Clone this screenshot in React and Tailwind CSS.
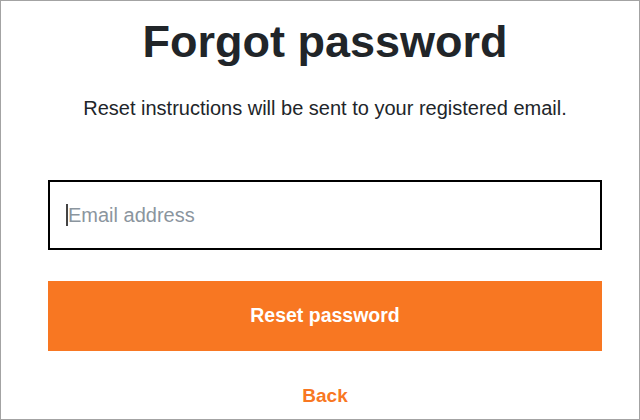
export default function App() {
  return (
    <div className="w-[640px] h-[420px] border border-[#a3a3a3] bg-white overflow-hidden" style={{ fontFamily: '"Liberation Sans", Arial, sans-serif' }}>
      <div className="ml-[47px] w-[554px] flex flex-col items-center">
        <h1 className="mt-[15px] text-[45px] leading-[52px] font-bold text-[#212529]">Forgot password</h1>
        <p className="mt-[28px] text-[20px] leading-[24px] text-[#212529]">Reset instructions will be sent to your registered email.</p>
        <div className="mt-[60px] w-full h-[70px] border-2 border-black flex items-center pl-[16px]">
          <span className="w-[2px] h-[22px] bg-[#444]" />
          <span className="text-[20px] text-[#8b959e]">Email address</span>
        </div>
        <button className="mt-[31px] w-full h-[70px] bg-[#f87722] text-white text-[19.5px] font-bold">Reset password</button>
        <a className="mt-[33px] text-[19px] font-bold text-[#f87722] leading-[24px]">Back</a>
      </div>
    </div>
  );
}
